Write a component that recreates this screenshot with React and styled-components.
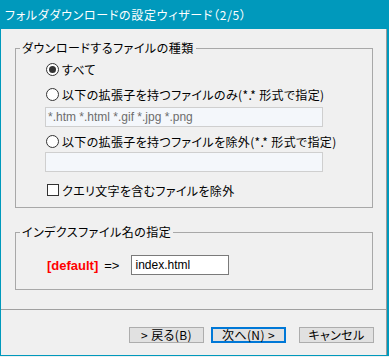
import React from 'react';
import styled, { createGlobalStyle } from 'styled-components';

const COLORS = {
  frame: '#0099BC',
  face: '#F0F0F0',
  groupLine: '#A8A8A8',
  field: '#F4F7FB',
  fieldLine: '#CFCFCF',
  text: '#000000',
  hint: '#6D6D6D',
  button: '#E1E1E1',
  buttonLine: '#ADADAD',
  focus: '#0078D7',
  red: '#FF0000',
};

const JP = `"Noto Sans CJK JP", "Noto Sans", sans-serif`;
const LATIN = `"Liberation Sans", "Noto Sans CJK JP", sans-serif`;

const Global = createGlobalStyle`
  html, body { margin: 0; padding: 0; background: ${COLORS.face}; }
  body { font-family: ${JP}; font-size: 12px; color: ${COLORS.text}; }
  * { box-sizing: border-box; }
`;

/* ---------- window frame ---------- */
const Window = styled.div`
  width: 389px;
  height: 356px;
  display: flex;
  flex-direction: column;
  background: ${COLORS.frame};
  padding: 0 2px 1px 1px;
`;

const TitleBar = styled.div`
  height: 29px;
  flex: none;
  display: flex;
  align-items: center;
  padding-left: 4px;
  color: #fff;
  font-family: ${JP};
  font-feature-settings: 'palt';
  letter-spacing: 0.7px;
  font-size: 12px;
`;

const Client = styled.div`
  flex: 1;
  background: ${COLORS.face};
  border-right: 1px solid #9C9C9C;
  display: flex;
  flex-direction: column;
`;

/* ---------- group boxes ---------- */
const Group = styled.fieldset`
  margin: ${p => p.$top}px 0 0 14px;
  width: 358px;
  padding: 0;
  border: 1px solid ${COLORS.groupLine};
  border-radius: 0;
  min-width: 0;
`;

const Legend = styled.legend`
  margin-left: 4px;
  padding: 0 2px;
  line-height: 14px;
  font-family: ${JP};
  font-feature-settings: 'palt';
  letter-spacing: 0.5px;
  font-size: 12px;
`;

const GroupBody = styled.div`
  display: flex;
  flex-direction: column;
  padding: ${p => p.$pad};
`;

/* ---------- options ---------- */
const OptionRow = styled.label`
  display: flex;
  align-items: center;
  height: 16px;
  margin-top: ${p => p.$gap}px;
  font-family: ${JP};
  font-feature-settings: 'palt';
  letter-spacing: 0.35px;
  font-size: 12px;
  white-space: nowrap;
`;

const RadioMark = styled.span`
  width: 13px;
  height: 13px;
  margin-left: 1px;
  margin-right: 3px;
  border: 1px solid #333;
  border-radius: 50%;
  background: #fff;
  display: inline-flex;
  align-items: center;
  justify-content: center;
  flex: none;

  &::after {
    content: '';
    width: 7px;
    height: 7px;
    border-radius: 50%;
    background: ${p => (p.$on ? '#333' : 'transparent')};
  }
`;

const CheckMark = styled.span`
  width: 12px;
  height: 12px;
  margin-left: 2px;
  margin-right: 3px;
  border: 1px solid #333;
  background: #fff;
  flex: none;
`;

const Field = styled.div`
  width: 278px;
  height: 20px;
  margin-top: ${p => p.$gap}px;
  background: ${COLORS.field};
  border: 1px solid ${COLORS.fieldLine};
  display: flex;
  align-items: center;
  padding-left: 2px;
  color: ${COLORS.hint};
  font-family: ${LATIN};
  font-size: 12px;
  white-space: nowrap;
`;

/* ---------- index file row ---------- */
const IndexRow = styled.div`
  display: flex;
  align-items: center;
  height: 20px;
`;

const DefaultTag = styled.span`
  color: ${COLORS.red};
  font-family: ${LATIN};
  font-weight: 700;
  font-size: 13px;
`;

const Arrow = styled.span`
  margin-left: 6px;
  font-family: ${LATIN};
  font-size: 13px;
`;

const NameInput = styled.div`
  margin-left: 12px;
  width: 98px;
  height: 20px;
  border: 1px solid #7A7A7A;
  background: #fff;
  display: flex;
  align-items: center;
  padding-left: 3px;
  font-family: ${LATIN};
  font-size: 12px;
`;

/* ---------- footer ---------- */
const Separator = styled.div`
  margin-top: 19px;
  height: 1px;
  background: #A0A0A0;
`;

const ButtonBar = styled.div`
  display: flex;
  justify-content: flex-end;
  padding: 17px 12px 0 0;
`;

const Button = styled.button`
  width: 75px;
  height: 16px;
  margin-left: ${p => p.$gap}px;
  padding: 0;
  background: ${COLORS.button};
  border: ${p => (p.$default ? `2px solid ${COLORS.focus}` : `1px solid ${COLORS.buttonLine}`)};
  border-radius: 0;
  font-family: ${JP};
  font-feature-settings: 'palt';
  letter-spacing: 0.4px;
  font-size: 12px;
  line-height: 12px;
  color: ${COLORS.text};
  display: flex;
  align-items: center;
  justify-content: center;
`;

export default function App() {
  return (
    <>
      <Global />
      <Window>
        <TitleBar>フォルダダウンロードの設定ウィザード（2/5）</TitleBar>
        <Client>
          <Group $top={12}>
            <Legend>ダウンロードするファイルの種類</Legend>
            <GroupBody $pad="0 0 9px 29px">
              <OptionRow $gap={6}>
                <RadioMark $on />
                すべて
              </OptionRow>
              <OptionRow $gap={9}>
                <RadioMark />
                以下の拡張子を持つファイルのみ(*.* 形式で指定)
              </OptionRow>
              <Field $gap={5}>*.htm *.html *.gif *.jpg *.png</Field>
              <OptionRow $gap={6}>
                <RadioMark />
                以下の拡張子を持つファイルを除外(*.* 形式で指定)
              </OptionRow>
              <Field $gap={3} />
              <OptionRow $gap={10}>
                <CheckMark />
                クエリ文字を含むファイルを除外
              </OptionRow>
            </GroupBody>
          </Group>

          <Group $top={17}>
            <Legend>インデクスファイル名の指定</Legend>
            <GroupBody $pad="16px 0 14px 31px">
              <IndexRow>
                <DefaultTag>[default]</DefaultTag>
                <Arrow>=&gt;</Arrow>
                <NameInput>index.html</NameInput>
              </IndexRow>
            </GroupBody>
          </Group>

          <Separator />
          <ButtonBar>
            <Button>&gt; 戻る(B)</Button>
            <Button $gap={7} $default>次へ(N) &gt;</Button>
            <Button $gap={13}>キャンセル</Button>
          </ButtonBar>
        </Client>
      </Window>
    </>
  );
}
